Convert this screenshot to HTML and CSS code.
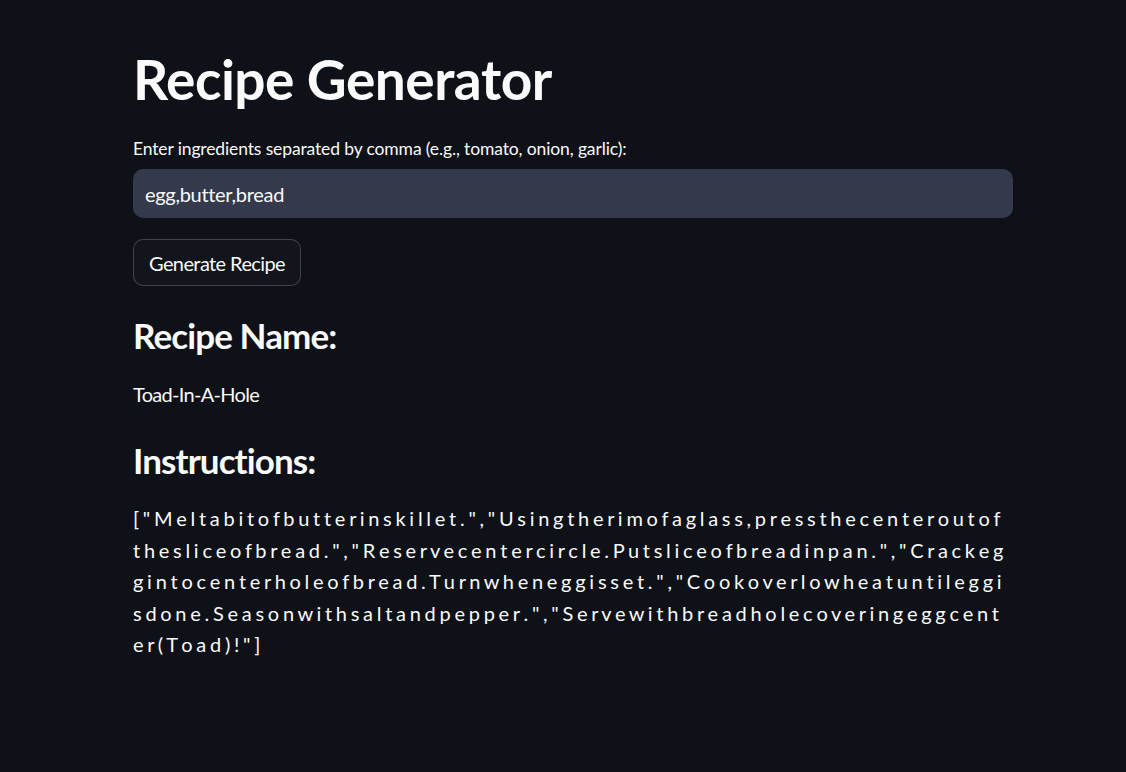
FILE: index.html
```html
<!DOCTYPE html>
<html lang="en">
<head>
<meta charset="utf-8">
<title>Recipe Generator</title>
<link rel="stylesheet" href="styles.css">
</head>
<body>
<main class="main">
  <h1 class="title">Recipe Generator</h1>
  <label class="label" for="ing">Enter ingredients separated by comma (e.g., tomato, onion, garlic):</label>
  <div class="input-wrap"><input id="ing" class="input" type="text" value="egg,butter,bread"></div>
  <button class="btn" type="button">Generate Recipe</button>
  <h3 class="h3 h3-first">Recipe Name:</h3>
  <p class="text name">Toad-In-A-Hole</p>
  <h3 class="h3">Instructions:</h3>
  <p class="text instr">[ " M e l t a b i t o f b u t t e r i n s k i l l e t . " , " U s i n g t h e r i m o f a g l a s s , p r e s s t h e c e n t e r o u t o f<br>t h e s l i c e o f b r e a d . " , " R e s e r v e c e n t e r c i r c l e . P u t s l i c e o f b r e a d i n p a n . " , " C r a c k e g<br>g i n t o c e n t e r h o l e o f b r e a d . T u r n w h e n e g g i s s e t . " , " C o o k o v e r l o w h e a t u n t i l e g g i<br>s d o n e . S e a s o n w i t h s a l t a n d p e p p e r . " , " S e r v e w i t h b r e a d h o l e c o v e r i n g e g g c e n t<br>e r ( T o a d ) ! " ]</p>
</main>
</body>
</html>
```

FILE: styles.css
```css
html, body {
  margin: 0;
  padding: 0;
  background: #0e1117;
}
body {
  font-family: Lato, "Liberation Sans", sans-serif;
  color: #fafafa;
}
.main {
  width: 880px;
  margin-left: 133px;
  padding-top: 46px;
  display: flex;
  flex-direction: column;
  align-items: flex-start;
}
.title {
  margin: 0;
  font-size: 55px;
  line-height: 66px;
  font-weight: 700;
  letter-spacing: -0.5px;
}
.label {
  margin-top: 26px;
  font-size: 17.5px;
  line-height: 22px;
  letter-spacing: -0.13px;
}
.input-wrap {
  margin-top: 9px;
  width: 100%;
}
.input {
  box-sizing: border-box;
  width: 100%;
  height: 49px;
  border: 0;
  border-radius: 10px;
  background: #343a4c;
  color: #fafafa;
  font-family: inherit;
  font-size: 20px;
  letter-spacing: -0.3px;
  padding: 0 12px;
  outline: none;
}
.btn {
  margin-top: 21px;
  height: 47px;
  padding: 0 15px;
  border: 1px solid rgba(250, 250, 250, 0.2);
  border-radius: 10px;
  background: #12151c;
  color: #fafafa;
  font-family: inherit;
  font-size: 20px;
  letter-spacing: -0.6px;
}
.h3 {
  margin: 0;
  font-size: 35px;
  line-height: 42px;
  font-weight: 700;
  letter-spacing: -0.9px;
}
.h3-first {
  margin-top: 28px;
}
.text {
  margin: 0;
  font-size: 20px;
  line-height: 32px;
}
.name {
  letter-spacing: -0.7px;
}
.h3 + .text {
  margin-top: 22px;
}
.text + .h3 {
  margin-top: 29px;
}
.instr {
  margin-top: 22px;
  line-height: 31.5px;
  white-space: nowrap;
  word-spacing: -1.4px;
}
```
